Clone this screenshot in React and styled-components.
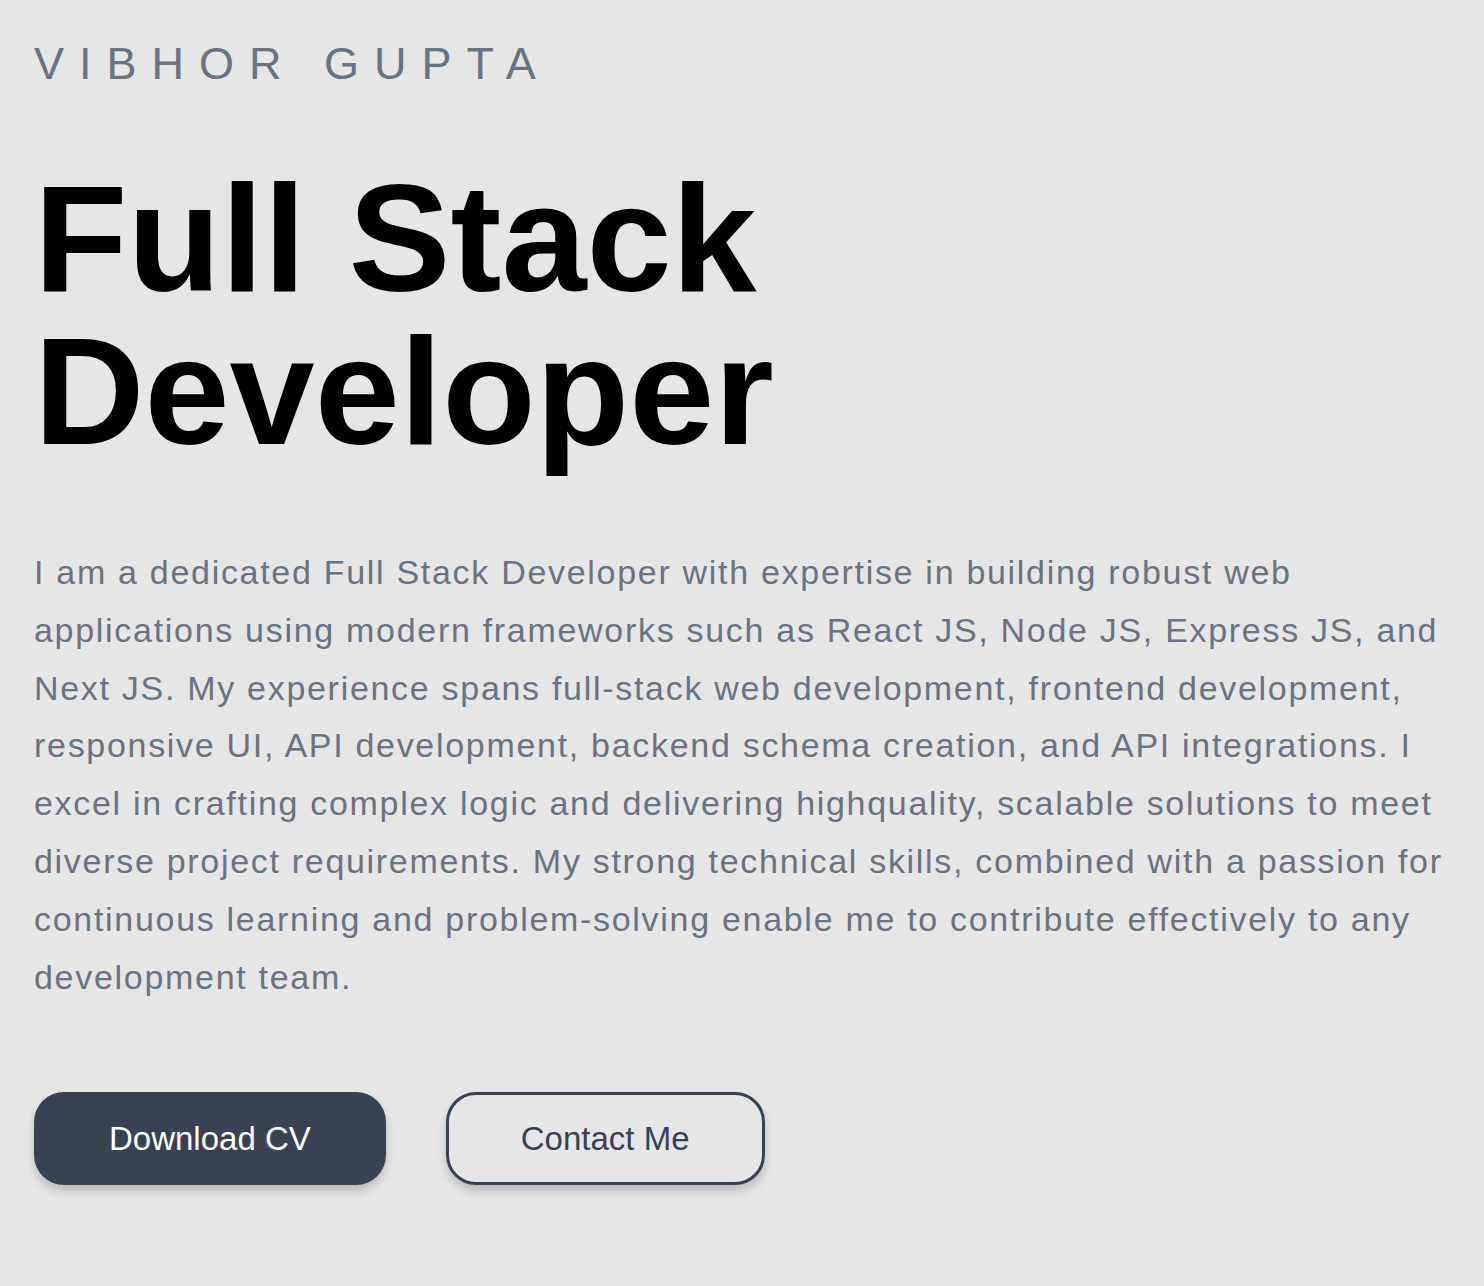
import React from "react";
import styled, { createGlobalStyle } from "styled-components";

const GlobalStyle = createGlobalStyle`
  * {
    box-sizing: border-box;
  }
  body {
    margin: 0;
    background: #e6e6e6;
    font-family: "Liberation Sans", Arial, Helvetica, sans-serif;
  }
`;

const Hero = styled.section`
  min-height: 1286px;
  padding: 41px 34px 0 34px;
  display: flex;
  flex-direction: column;
  align-items: flex-start;
`;

const Name = styled.h2`
  margin: 0;
  font-size: 45px;
  line-height: 45px;
  font-weight: 400;
  letter-spacing: 15px;
  color: #6b7280;
  text-transform: uppercase;
`;

const Title = styled.h1`
  margin: 75px 0 0 0;
  font-size: 153px;
  line-height: 153px;
  font-weight: 700;
  color: #000000;
`;

const Intro = styled.p`
  margin: 77px 0 0 0;
  max-width: 1416px;
  font-size: 34px;
  line-height: 57.8px;
  letter-spacing: 1.7px;
  color: #6b7280;
`;

const Actions = styled.div`
  display: flex;
  gap: 60px;
  margin-top: 86px;
`;

const Button = styled.button`
  height: 93px;
  padding: 0 ${p => (p.outline ? "72px" : "75px")};
  border-radius: 30px;
  font-family: inherit;
  font-size: 33px;
  cursor: pointer;
  border: ${p => (p.outline ? "3px solid #374151" : "none")};
  background: ${p => (p.outline ? "transparent" : "#3a4150")};
  color: ${p => (p.outline ? "#374151" : "#ffffff")};
  box-shadow: 0 6px 10px rgba(0, 0, 0, 0.18);
`;

const App = () => {
  return (
    <>
      <GlobalStyle />
      <Hero>
        <Name>Vibhor Gupta</Name>
        <Title>
          Full Stack
          <br />
          Developer
        </Title>
        <Intro>
          I am a dedicated Full Stack Developer with expertise in building
          robust web applications using modern frameworks such as React JS,
          Node JS, Express JS, and Next JS. My experience spans full-stack web
          development, frontend development, responsive UI, API development,
          backend schema creation, and API integrations. I excel in crafting
          complex logic and delivering highquality, scalable solutions to meet
          diverse project requirements. My strong technical skills, combined
          with a passion for continuous learning and problem-solving enable me
          to contribute effectively to any development team.
        </Intro>
        <Actions>
          <Button>Download CV</Button>
          <Button outline>Contact Me</Button>
        </Actions>
      </Hero>
    </>
  );
};

export default App;
